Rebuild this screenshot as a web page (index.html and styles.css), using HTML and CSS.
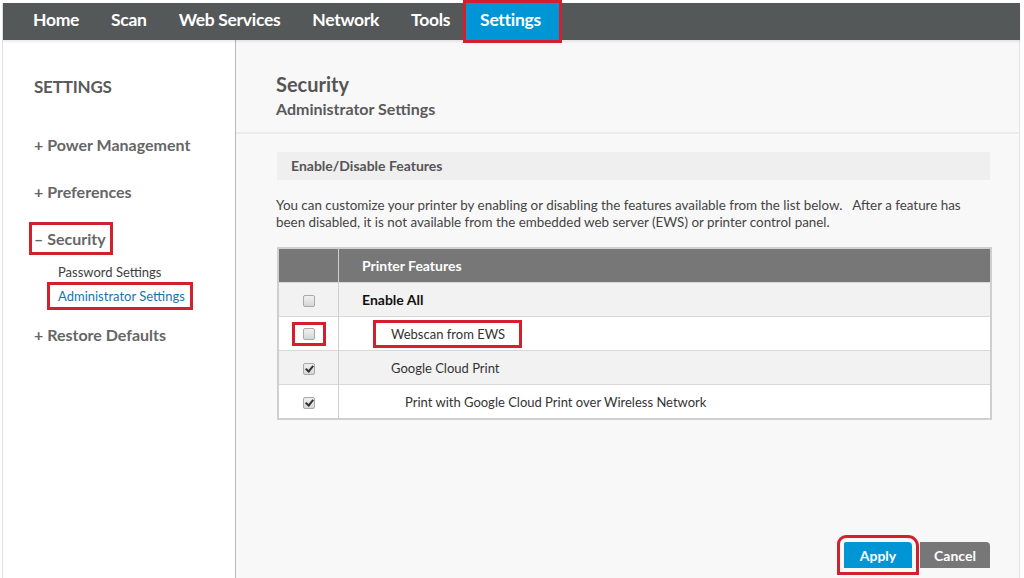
FILE: index.html
```html
<!DOCTYPE html>
<html lang="en">
<head>
  <meta charset="UTF-8">
  <title>Settings - Security</title>
  <link rel="stylesheet" href="styles.css">
</head>
<body>
<div class="page">
  <!-- Top navigation -->
  <nav class="topnav">
    <a class="nav-item">Home</a>
    <a class="nav-item">Scan</a>
    <a class="nav-item">Web Services</a>
    <a class="nav-item">Network</a>
    <a class="nav-item">Tools</a>
    <a class="nav-item active mark">Settings</a>
  </nav>

  <div class="layout">
    <!-- Left menu -->
    <aside class="sidebar">
      <h3 class="side-title">SETTINGS</h3>
      <div class="side-group">+ Power Management</div>
      <div class="side-group">+ Preferences</div>
      <div class="side-group open"><span class="mark">&ndash; Security</span></div>
      <ul class="side-sub">
        <li>Password Settings</li>
        <li class="current"><span class="mark">Administrator Settings</span></li>
      </ul>
      <div class="side-group">+ Restore Defaults</div>
    </aside>

    <!-- Content -->
    <main class="main">
      <header class="main-head">
        <h1>Security</h1>
        <h2>Administrator Settings</h2>
      </header>

      <section class="main-body">
        <div class="section-bar">Enable/Disable Features</div>
        <p class="intro">You can customize your printer by enabling or disabling the features available from the list below. &nbsp; After a feature has been disabled, it is not available from the embedded web server (EWS) or printer control panel.</p>

        <table class="features">
          <thead>
            <tr><th class="col-check"></th><th>Printer Features</th></tr>
          </thead>
          <tbody>
            <tr class="shade">
              <td class="col-check"><span class="cb"></span></td>
              <td class="lvl0"><b>Enable All</b></td>
            </tr>
            <tr>
              <td class="col-check"><span class="mark mark-cb"><span class="cb"></span></span></td>
              <td class="lvl1"><span class="mark mark-text">Webscan from EWS</span></td>
            </tr>
            <tr class="shade">
              <td class="col-check"><span class="cb checked"></span></td>
              <td class="lvl1">Google Cloud Print</td>
            </tr>
            <tr>
              <td class="col-check"><span class="cb checked"></span></td>
              <td class="lvl2">Print with Google Cloud Print over Wireless Network</td>
            </tr>
          </tbody>
        </table>

        <div class="actions">
          <button class="btn btn-apply mark">Apply</button>
          <button class="btn btn-cancel">Cancel</button>
        </div>
      </section>
    </main>
  </div>
</div>
</body>
</html>
```

FILE: styles.css
```css
body {
  margin: 0;
  background: #fff;
  font-family: Lato, "Open Sans", sans-serif;
  color: #4a4a4a;
  overflow: hidden;
}

.page {
  margin: 3px 4px 0 2px;
  height: 575px;
  display: flex;
  flex-direction: column;
  border-left: 1px solid #e2e2e2;
}

/* annotation boxes */
.mark {
  outline: 3px solid #d3202f;
}

.topnav {
  height: 37px;
  background: #555859;
  display: flex;
  align-items: stretch;
  padding-left: 14px;
  box-shadow: 0 2px 2px rgba(0,0,0,0.08);
  position: relative;
  z-index: 1;
}
.nav-item {
  color: #fff;
  font-weight: 700;
  font-size: 17.5px;
  line-height: 33px;
  padding: 0 16px;
  letter-spacing: -0.3px;
}
.nav-item.active {
  background: #0096d6;
  padding: 0 18px 0 14px;
  outline-offset: 0px;
}

.layout {
  flex: 1;
  display: flex;
  min-height: 0;
}

.sidebar {
  width: 233px;
  background: #fff;
  border-right: 1px solid #b9b9b9;
  padding: 36px 0 0 31px;
  box-sizing: border-box;
  flex: none;
}
.side-title {
  margin: 0 0 38px;
  font-size: 17px;
  font-weight: 700;
  color: #5a5a5a;
  letter-spacing: -0.2px;
}
.side-group {
  font-size: 16px;
  font-weight: 700;
  color: #666;
  margin-bottom: 27px;
  line-height: 20px;
}
.side-group.open {
  margin-bottom: 11px;
}
.side-group.open .mark {
  padding: 4px 4px 4px 2px;
  margin-left: -2px;
}
.side-sub {
  list-style: none;
  margin: 0 0 17px;
  padding: 0 0 0 24px;
  font-size: 13px;
  color: #3d3d3d;
}
.side-sub li {
  line-height: 24px;
}
.side-sub .current {
  color: #1675ad;
}
.side-sub .current .mark {
  padding: 3px 5px 3px 0;
  margin-left: -8px;
  padding-left: 8px;
}

.main {
  flex: 1;
  background: #f8f8f8;
  border-right: 1px solid #e4e4e4;
  display: flex;
  flex-direction: column;
  min-width: 0;
}
.main-head {
  padding: 32px 40px 10px;
  border-bottom: 2px solid #ececec;
}
.main-head h1 {
  margin: 0;
  font-size: 20px;
  font-weight: 700;
  color: #555;
  line-height: 24px;
}
.main-head h2 {
  margin: 0;
  font-size: 16px;
  font-weight: 700;
  color: #5a5a5a;
  line-height: 26px;
}

.main-body {
  flex: 1;
  display: flex;
  flex-direction: column;
  padding: 18px 29px 10px 41px;
}
.section-bar {
  background: #efefef;
  height: 28px;
  line-height: 28px;
  padding-left: 14px;
  font-size: 14px;
  font-weight: 700;
  color: #555;
}
.intro {
  margin: 17px 0 16px -1px;
  font-size: 13.4px;
  line-height: 17px;
  color: #444;
}

.features {
  border-collapse: collapse;
  width: calc(100% + 2px);
  border: 2px solid #cfcfcf;
  font-size: 13px;
}
.features th {
  background: #777;
  color: #fff;
  text-align: left;
  font-size: 14px;
  font-weight: 700;
  height: 33px;
  padding: 0 0 0 23px;
}
.features .col-check {
  width: 59px;
  padding: 0;
  text-align: center;
  border-right: 1px solid #cfcfcf;
}
.features td {
  height: 33px;
  padding-top: 0;
  padding-bottom: 0;
  border-top: 1px solid #d8d8d8;
  background: #fff;
  color: #333;
}
.features tr.shade td {
  background: #f2f2f2;
}
.features .lvl0 { padding-left: 23px; color: #111; font-size: 14px; }
.features .lvl1 { padding-left: 52px; }
.features .lvl2 { padding-left: 66px; }

.cb {
  display: inline-block;
  width: 10px;
  height: 10px;
  border: 1px solid #a9a9a9;
  border-radius: 2px;
  background: linear-gradient(#f0f0f0, #d6d6d6);
  vertical-align: middle;
  position: relative;
}
.cb.checked::after {
  content: "";
  position: absolute;
  left: 3px;
  top: 0px;
  width: 3px;
  height: 6px;
  border: solid #333;
  border-width: 0 2px 2px 0;
  transform: rotate(40deg);
}
.mark-cb {
  display: inline-block;
  padding: 3px 8px;
  line-height: 0;
}
.mark-text {
  display: inline-block;
  padding: 3px 14px 3px 15px;
  margin-left: -15px;
}

.actions {
  margin-top: auto;
  display: flex;
  justify-content: flex-end;
  gap: 8px;
  padding-right: 0;
}
.btn {
  border: none;
  color: #fff;
  font-family: inherit;
  font-size: 14px;
  font-weight: 700;
  height: 26px;
  padding: 0;
  cursor: pointer;
}
.btn-apply {
  width: 68px;
  background: #0096d6;
  border-radius: 2px 4px 0 0;
  outline-offset: 4px;
}
.btn-cancel {
  width: 70px;
  background: #777;
  border-radius: 0 4px 0 0;
}
```
